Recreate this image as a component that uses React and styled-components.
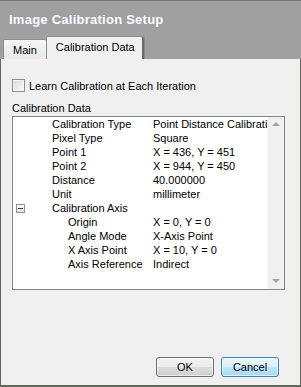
import React from "react";
import styled, { createGlobalStyle } from "styled-components";

const Global = createGlobalStyle`
  html, body { margin: 0; padding: 0; background: #f0f0f0; }
  body { font-family: "Liberation Sans", Arial, sans-serif; font-size: 11px; color: #000; }
  * { box-sizing: border-box; }
`;

const Window = styled.div`
  width: 301px;
  height: 387px;
  display: flex;
  flex-direction: column;
  overflow: hidden;
`;

const Header = styled.div`
  background: #a0a0a0;
  border-top: 1px solid #787878;
  height: 59px;
  display: flex;
  flex-direction: column;
  justify-content: space-between;
`;

const Title = styled.div`
  font-family: "Liberation Sans", Arial, sans-serif;
  font-weight: bold;
  font-size: 13px;
  letter-spacing: 0.25px;
  color: #fff;
  text-shadow: 0 0 1px rgba(120, 140, 200, 0.5);
  padding: 11px 0 0 9px;
  line-height: 15px;
`;

const TabStrip = styled.div`
  display: flex;
  align-items: flex-end;
  padding-left: 3px;
`;

const Tab = styled.div`
  height: ${(p) => (p.$active ? 23 : 20)}px;
  padding: 0 9px;
  display: flex;
  align-items: center;
  padding-bottom: ${(p) => (p.$active ? 2 : 0)}px;
  border: 1px solid #898c95;
  border-bottom: none;
  border-radius: 2px 2px 0 0;
  background: ${(p) =>
    p.$active ? "#f0f0f0" : "linear-gradient(#f5f5f5, #e9e9e9)"};
  box-shadow: ${(p) => (p.$active ? "inset -2px 0 0 #6c6c6c" : "none")};
  margin-left: ${(p) => (p.$active ? -1 : 0)}px;
  color: #000;
  font-size: 11px;
`;

const Body = styled.div`
  flex: 1;
  background: #f0f0f0;
  border-left: 1px solid #5f675b;
  border-right: 1px solid #5f675b;
  border-bottom: 2px solid #5f675b;
  display: flex;
  flex-direction: column;
  padding: 20px 0 8px 11px;
`;

const CheckRow = styled.label`
  display: flex;
  align-items: center;
  gap: 4px;
  height: 13px;
`;

const CheckBox = styled.span`
  width: 13px;
  height: 13px;
  border: 1px solid #8e8f8f;
  background: linear-gradient(135deg, #dcdcdc, #fafafa);
  box-shadow: inset 0 0 0 1px #f4f4f4;
`;

const GroupLabel = styled.div`
  margin-top: 9px;
  line-height: 14px;
  height: 15px;
`;

const TreeBox = styled.div`
  width: 273px;
  height: 174px;
  border: 1px solid #828790;
  background: #fff;
  display: flex;
`;

const Rows = styled.div`
  flex: 1;
  overflow: hidden;
`;

const Row = styled.div`
  display: flex;
  height: 14px;
  line-height: 14px;
  white-space: nowrap;
`;

const ExpCell = styled.div`
  width: 39px;
  display: flex;
  align-items: center;
  padding-left: 3px;
`;

const Expander = styled.span`
  width: 9px;
  height: 9px;
  border: 1px solid #919191;
  background: linear-gradient(#fafafa, #e4e4e4);
  display: flex;
  align-items: center;
  justify-content: center;
  &::after {
    content: "";
    width: 5px;
    height: 1px;
    background: #3a3a3a;
  }
`;

const LabelCell = styled.div`
  width: 101px;
  padding-left: ${(p) => (p.$level === 2 ? 16 : 0)}px;
`;

const ValueCell = styled.div`
  flex: 1;
  overflow: hidden;
`;

const ScrollBar = styled.div`
  width: 17px;
  background: #f0f0f0;
  border-left: 1px solid #f7f7f7;
  display: flex;
  flex-direction: column;
  justify-content: space-between;
  align-items: center;
  padding: 5px 0 6px;
`;

const Arrow = styled.span`
  width: 0;
  height: 0;
  border-left: 4px solid transparent;
  border-right: 4px solid transparent;
  ${(p) =>
    p.$up
      ? "border-bottom: 4px solid #a3a3a3;"
      : "border-top: 4px solid #a3a3a3;"}
`;

const Spacer = styled.div`
  flex: 1;
`;

const Buttons = styled.div`
  display: flex;
  justify-content: flex-end;
  gap: 7px;
  padding-right: 21px;
`;

const Button = styled.button`
  width: 58px;
  height: 20px;
  padding: 0;
  font-family: "Liberation Sans", Arial, sans-serif;
  font-size: 11px;
  color: #000;
  border-radius: 3px;
  border: 1px solid ${(p) => (p.$default ? "#3c7fb1" : "#707070")};
  background: ${(p) =>
    p.$default
      ? "linear-gradient(#eaf6fd 0%, #d9f0fc 50%, #bee6fd 50%, #a7d9f5 100%)"
      : "linear-gradient(#f2f2f2 0%, #ebebeb 50%, #dddddd 50%, #cfcfcf 100%)"};
  box-shadow: inset 0 0 0 1px rgba(255, 255, 255, 0.6);
`;

const rows = [
  { label: "Calibration Type", value: "Point Distance Calibration" },
  { label: "Pixel Type", value: "Square" },
  { label: "Point 1", value: "X = 436, Y = 451" },
  { label: "Point 2", value: "X = 944, Y = 450" },
  { label: "Distance", value: "40.000000" },
  { label: "Unit", value: "millimeter" },
  { label: "Calibration Axis", value: "", expander: true },
  { label: "Origin", value: "X = 0, Y = 0", level: 2 },
  { label: "Angle Mode", value: "X-Axis Point", level: 2 },
  { label: "X Axis Point", value: "X = 10, Y = 0", level: 2 },
  { label: "Axis Reference", value: "Indirect", level: 2 },
];

export default function App() {
  return (
    <Window>
      <Global />
      <Header>
        <Title>Image Calibration Setup</Title>
        <TabStrip>
          <Tab>Main</Tab>
          <Tab $active>Calibration Data</Tab>
        </TabStrip>
      </Header>
      <Body>
        <CheckRow>
          <CheckBox />
          <span>Learn Calibration at Each Iteration</span>
        </CheckRow>
        <GroupLabel>Calibration Data</GroupLabel>
        <TreeBox>
          <Rows>
            {rows.map((r) => (
              <Row key={r.label}>
                <ExpCell>{r.expander && <Expander />}</ExpCell>
                <LabelCell $level={r.level || 1}>{r.label}</LabelCell>
                <ValueCell>{r.value}</ValueCell>
              </Row>
            ))}
          </Rows>
          <ScrollBar>
            <Arrow $up />
            <Arrow />
          </ScrollBar>
        </TreeBox>
        <Spacer />
        <Buttons>
          <Button>OK</Button>
          <Button $default>Cancel</Button>
        </Buttons>
      </Body>
    </Window>
  );
}
